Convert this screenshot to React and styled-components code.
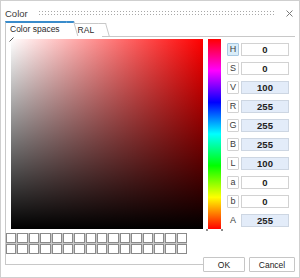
import React from "react"
import styled, { createGlobalStyle } from "styled-components"

const GlobalStyle = createGlobalStyle`
  html, body {
    margin: 0;
    padding: 0;
    background: #ffffff;
  }
  * {
    box-sizing: border-box;
  }
`

const Dialog = styled.div`
  width: 300px;
  height: 278px;
  border: 1px solid #cfcfcf;
  background: #ffffff;
  font-family: "Liberation Sans", Arial, sans-serif;
  color: #333333;
  display: flex;
  flex-direction: column;
`

const TitleBar = styled.div`
  height: 20px;
  padding: 4px 6px 0 4px;
  display: flex;
  align-items: center;
`

const Title = styled.span`
  font-size: 9.5px;
  color: #3a3a3a;
`

const Dots = styled.div`
  flex: 1;
  height: 6px;
  margin: 0 10px;
  background-image: radial-gradient(circle, #a8a8a8 0.7px, transparent 1px);
  background-size: 3px 3px;
`

const Close = styled.svg`
  width: 7px;
  height: 7px;
  display: block;
`

const TabStrip = styled.div`
  margin: 0 4px;
  height: 16px;
  border-bottom: 1px solid #c8c8c8;
  display: flex;
  align-items: flex-end;
`

const Tab = styled.div`
  position: relative;
  height: ${p => (p.$active ? 16 : 14)}px;
  margin-bottom: -1px;
  padding: 0 ${p => (p.$active ? 10 : 8)}px 0 ${p => (p.$active ? 4 : 8)}px;
  border-top: ${p => (p.$active ? "2px solid #3a8ccb" : "1px solid #c8c8c8")};
  border-left: ${p => (p.$active ? "1px solid #c8c8c8" : "none")};
  background: #ffffff;
  z-index: ${p => (p.$active ? 2 : 1)};
  font-size: 8.5px;
  line-height: 12px;
  color: #2a2a2a;
  &::after {
    content: "";
    position: absolute;
    top: ${p => (p.$active ? -2 : -1)}px;
    bottom: 1px;
    right: -4px;
    width: 7px;
    background: #ffffff;
    border-top: ${p => (p.$active ? "2px solid #3a8ccb" : "1px solid #c8c8c8")};
    border-right: 1px solid #c8c8c8;
    transform: skewX(16deg);
    transform-origin: top;
  }
`

const TabLabel = styled.span`
  position: relative;
  z-index: 3;
`

const Body = styled.div`
  flex: 1;
  display: grid;
  grid-template-columns: 202px 1fr;
`

const Panel = styled.div`
  margin-left: 4px;
  height: 228px;
  border-left: 1px solid #c8c8c8;
  border-bottom: 1px solid #c8c8c8;
  padding-top: 2px;
`

const Square = styled.div`
  position: relative;
  margin-left: 5px;
  width: 192px;
  height: 190px;
  background: linear-gradient(to top, #000000, rgba(0, 0, 0, 0)),
    linear-gradient(to right, #ffffff, #ff0000);
`

const Cursor = styled.svg`
  position: absolute;
  left: -2px;
  top: -2px;
  width: 5px;
  height: 5px;
`

const Swatches = styled.div`
  margin-top: 4px;
  width: 181px;
  height: 21px;
  display: grid;
  grid-template-columns: repeat(16, 1fr);
  grid-template-rows: repeat(2, 1fr);
  gap: 1px;
  background: #c6c6c6;
`

const Swatch = styled.div`
  background: #ffffff;
  border: 1px solid #8a8a8a;
`

const Side = styled.div`
  display: flex;
  flex-direction: column;
  padding: 2px 0 5px;
`

const SideTop = styled.div`
  display: flex;
  align-items: flex-start;
`

const HueBar = styled.div`
  position: relative;
  margin-left: 5px;
  width: 13px;
  height: 190px;
  background: linear-gradient(
    to bottom,
    #ff0000,
    #ff00ff,
    #0000ff,
    #00ffff,
    #00ff00,
    #ffff00,
    #ff0000
  );
`

const HueMark = styled.span`
  position: absolute;
  bottom: -2px;
  width: 2px;
  height: 2px;
  background: #8c8c8c;
  ${p => (p.$side === "left" ? "left: -2px;" : "right: -2px;")}
`

const Fields = styled.div`
  margin-left: 6px;
  padding-top: 4px;
  display: flex;
  flex-direction: column;
  gap: 6px;
`

const FieldRow = styled.div`
  display: flex;
  gap: 2px;
`

const Label = styled.div`
  width: 12px;
  height: 13px;
  border: 1px solid ${p => (p.$plain ? "transparent" : p.$active ? "#a9c9e2" : "#d2d2d2")};
  background: ${p => (p.$plain ? "transparent" : p.$active ? "#d9edf9" : "#ffffff")};
  border-radius: 1px;
  font-size: 9px;
  line-height: 11px;
  text-align: center;
  color: #3c3c3c;
`

const Value = styled.div`
  width: 48px;
  height: 13px;
  border: 1px solid ${p => (p.$tinted ? "#cdd6e2" : "#d2d2d2")};
  background: ${p => (p.$tinted ? "#e3ecf9" : "#ffffff")};
  font-size: 9.5px;
  font-weight: bold;
  line-height: 11px;
  text-align: center;
  color: #222222;
`

const Buttons = styled.div`
  margin-top: auto;
  display: flex;
  gap: 4px;
`

const Button = styled.button`
  width: ${p => p.$w}px;
  height: 15px;
  padding: 0;
  border: 1px solid #c6c6c6;
  border-radius: 1px;
  background: #ffffff;
  font-family: "Liberation Sans", Arial, sans-serif;
  font-size: 8.5px;
  color: #222222;
`

const fields = [
  { name: "H", value: "0", active: true },
  { name: "S", value: "0" },
  { name: "V", value: "100", tinted: true },
  { name: "R", value: "255", tinted: true },
  { name: "G", value: "255", tinted: true },
  { name: "B", value: "255", tinted: true },
  { name: "L", value: "100", tinted: true },
  { name: "a", value: "0" },
  { name: "b", value: "0" },
  { name: "A", value: "255", tinted: true, plain: true },
]

const App = () => (
  <>
    <GlobalStyle />
    <Dialog>
      <TitleBar>
        <Title>Color</Title>
        <Dots />
        <Close viewBox="0 0 7 7">
          <path d="M0.5 0.5L6.5 6.5M6.5 0.5L0.5 6.5" stroke="#7a7a7a" strokeWidth="1" />
        </Close>
      </TitleBar>
      <TabStrip>
        <Tab $active>
          <TabLabel>Color spaces</TabLabel>
        </Tab>
        <Tab>
          <TabLabel>RAL</TabLabel>
        </Tab>
      </TabStrip>
      <Body>
        <Panel>
          <Square>
            <Cursor viewBox="0 0 5 5">
              <path d="M0.5 4.5L4.5 0.5" stroke="#555" strokeWidth="1" />
            </Cursor>
          </Square>
          <Swatches>
            {Array.from({ length: 32 }, (_, i) => (
              <Swatch key={i} />
            ))}
          </Swatches>
        </Panel>
        <Side>
          <SideTop>
            <HueBar>
              <HueMark $side="left" />
              <HueMark $side="right" />
            </HueBar>
            <Fields>
              {fields.map(f => (
                <FieldRow key={f.name}>
                  <Label $active={f.active} $plain={f.plain}>
                    {f.name}
                  </Label>
                  <Value $tinted={f.tinted}>{f.value}</Value>
                </FieldRow>
              ))}
            </Fields>
          </SideTop>
          <Buttons>
            <Button $w={42}>OK</Button>
            <Button $w={46}>Cancel</Button>
          </Buttons>
        </Side>
      </Body>
    </Dialog>
  </>
)

export default App
